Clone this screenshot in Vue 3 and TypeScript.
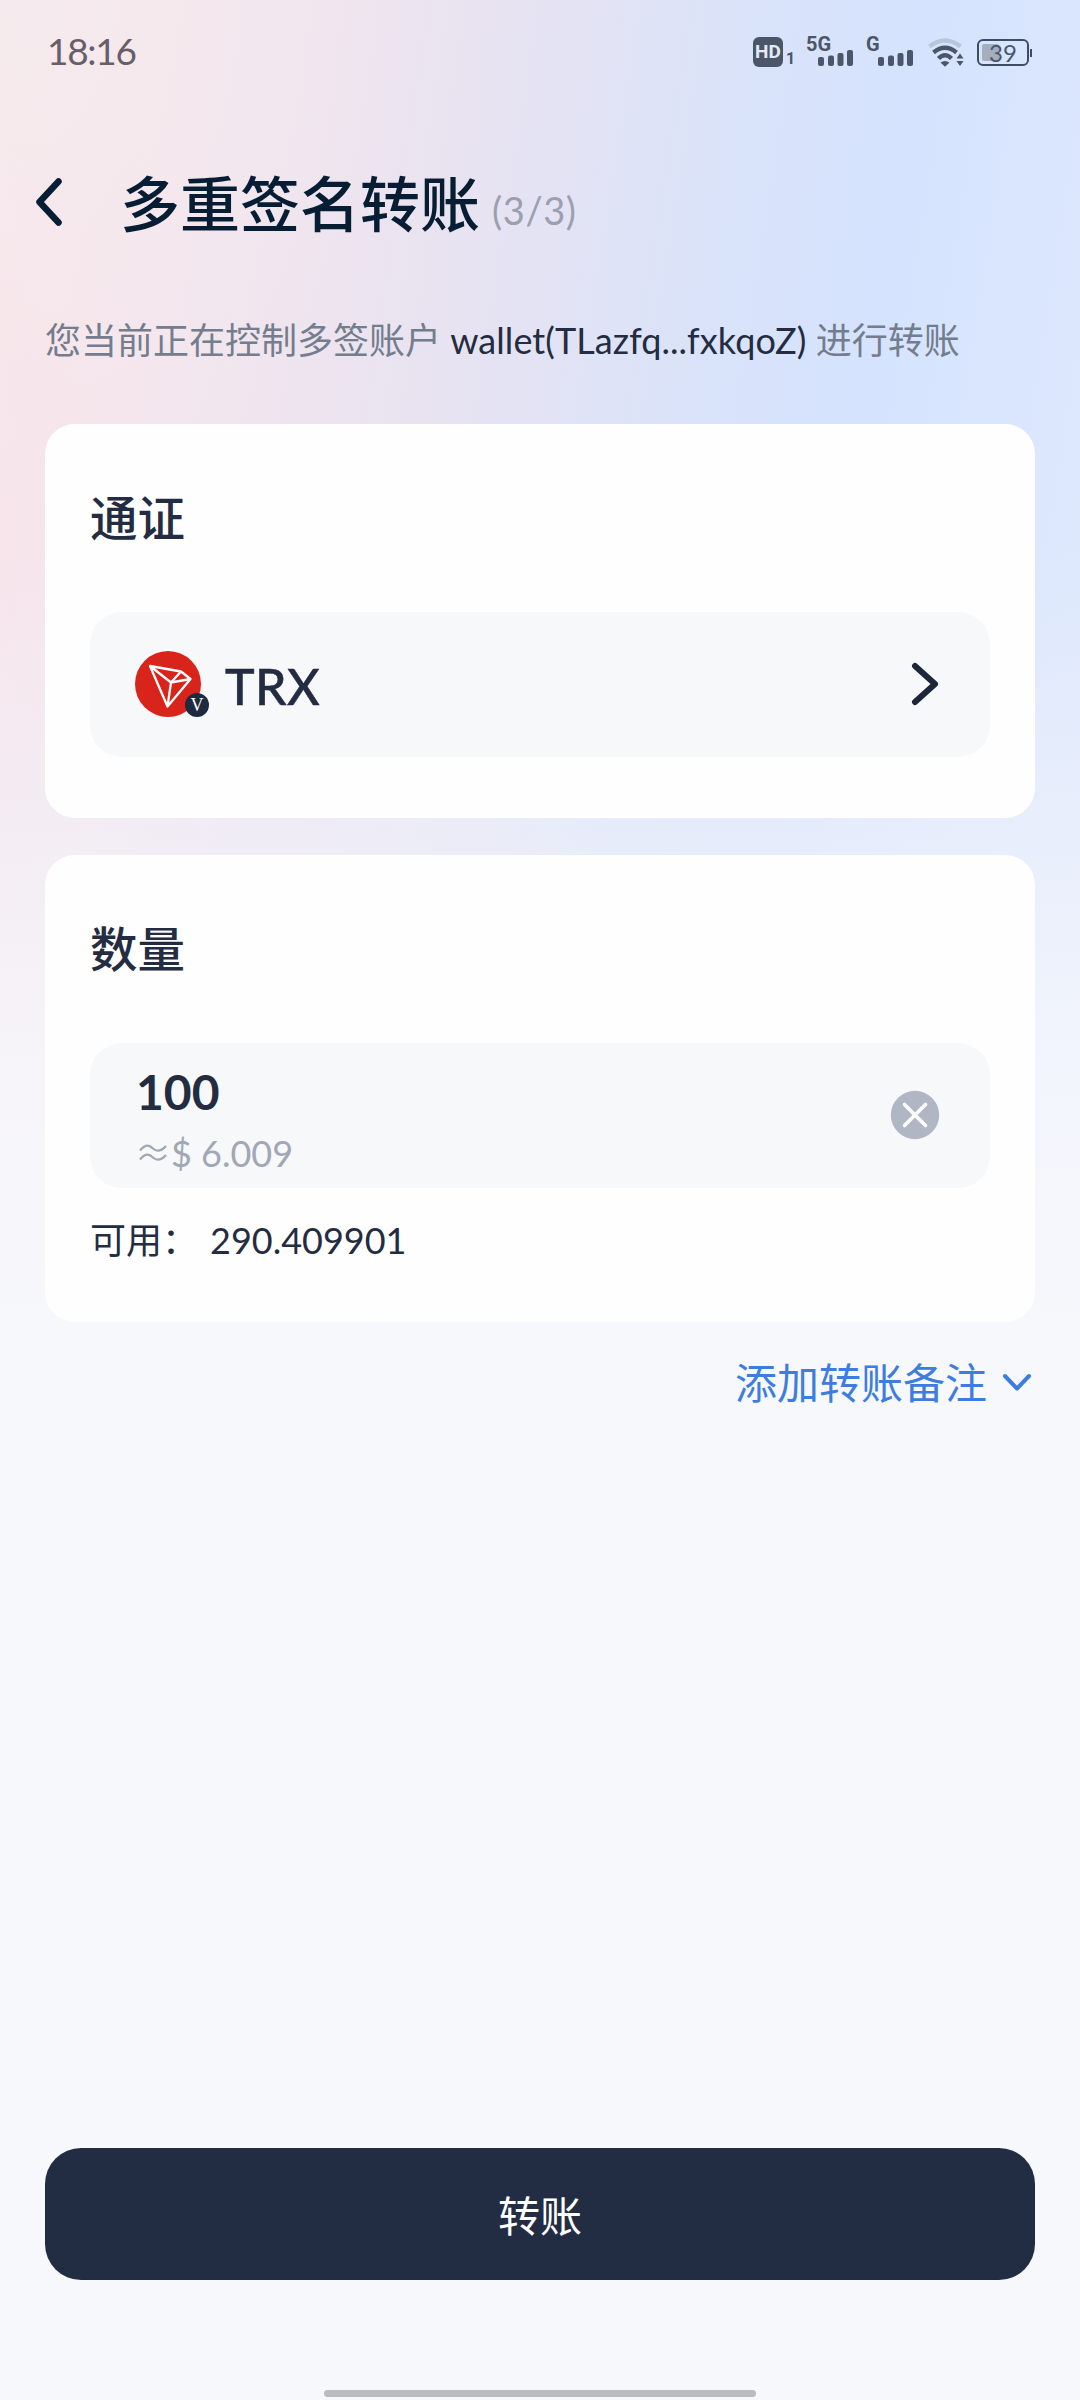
<script setup lang="ts">
interface SignalGroup {
  label: string
}

const signals: SignalGroup[] = [{ label: '5G' }, { label: 'G' }]
const account = 'wallet(TLazfq...fxkqoZ)'
const amount = '100'
const fiat = '6.009'
const available = '290.409901'
const battery = 39
</script>

<template>
  <div class="screen">
    <div class="status">
      <span class="clock">18:16</span>
      <div class="indicators">
        <div class="hd"><span>HD</span></div>
        <span class="sim">1</span>
        <div v-for="s in signals" :key="s.label" class="signal">
          <span class="net">{{ s.label }}</span>
          <svg class="bars" width="36" height="17" viewBox="0 0 36 17">
            <rect x="0" y="7" width="6" height="9" rx="2" />
            <rect x="10" y="5.500" width="6" height="10.500" rx="2" />
            <rect x="19.500" y="3" width="6" height="13" rx="2" />
            <rect x="29" y="0" width="6" height="16" rx="2" />
          </svg>
        </div>
        <svg class="wifi" width="38" height="29" viewBox="0 0 38 29">
          <g fill="none" stroke-width="4.400">
            <path d="M1.500 8.500Q17 -3.500 32.500 8.500" stroke="#b9c5da" />
            <path d="M5.500 14.500Q17 5 28.500 14.500" stroke="#4b5669" />
            <path d="M10.500 20.500Q17 14 23.500 20.500" stroke="#4b5669" />
          </g>
          <path d="M12.500 24.500Q17 21.500 21.500 24.500L17 28.800Z" fill="#4b5669" />
          <path d="M28.500 20.500L32 15.500L35.500 20.500ZM28.500 23L32 28L35.500 23Z" fill="#4b5669" />
        </svg>
        <div class="battery">
          <i class="level"></i>
          <span>{{ battery }}</span>
          <i class="tip"></i>
        </div>
      </div>
    </div>

    <header class="header">
      <svg class="back" width="28" height="54" viewBox="0 0 28 54">
        <path d="M24.500 6.500L5.500 27L24.500 47.500" />
      </svg>
      <h1>多重签名转账</h1>
      <span class="step">(3/3)</span>
    </header>

    <p class="notice">您当前正在控制多签账户 <b>{{ account }}</b> 进行转账</p>

    <section class="card token-card">
      <h2>通证</h2>
      <div class="field token">
        <div class="coin">
          <svg width="66" height="66" viewBox="0 0 66 66">
            <circle cx="33" cy="33" r="33" fill="#d9241c" />
            <path
              d="M15 15L46 20.500L55.500 28L32.500 55.500ZM15 15L36 31.500L46 20.500M36 31.500L55.500 28M36 31.500L32.500 55.500"
              fill="none" stroke="#fff" stroke-width="2.300" stroke-linejoin="round"
            />
          </svg>
          <span class="badge">V</span>
        </div>
        <span class="symbol">TRX</span>
        <svg class="go" width="28" height="44" viewBox="0 0 28 44">
          <path d="M4 4L24 22L4 40" />
        </svg>
      </div>
    </section>

    <section class="card amount-card">
      <h2>数量</h2>
      <div class="field amount">
        <div class="values">
          <span class="value">{{ amount }}</span>
          <span class="fiat">
            <svg width="28" height="18" viewBox="0 0 28 18">
              <path d="M1 6.500C7 -1 11 1.500 14 4.500S22 8 27 2M1 15.500C7 8 11 10.500 14 13.500S22 17 27 11" />
            </svg>
            <span>$ {{ fiat }}</span>
          </span>
        </div>
        <svg class="clear" width="50" height="50" viewBox="0 0 50 50">
          <circle cx="25" cy="25" r="24.200" fill="#b1b6c4" />
          <path d="M14.500 14.500L35.500 35.500M35.500 14.500L14.500 35.500" fill="none" stroke="#fff" stroke-width="3.600" stroke-linecap="round" />
        </svg>
      </div>
      <div class="available"><span class="caption">可用：</span><span>{{ available }}</span></div>
    </section>

    <div class="memo">
      <span>添加转账备注</span>
      <svg width="30" height="20" viewBox="0 0 30 20">
        <path d="M3 3L15 15.500L27 3" />
      </svg>
    </div>

    <footer class="footer">
      <button type="button" class="submit">转账</button>
      <i class="home"></i>
    </footer>
  </div>
</template>

<style>
body {
  margin: 0;
}
</style>

<style scoped>
.screen {
  display: flex;
  flex-direction: column;
  box-sizing: border-box;
  width: 1080px;
  height: 2400px;
  overflow: hidden;
  color: #232c41;
  font-family: Lato, "Noto Sans CJK SC", sans-serif;
  background:
    linear-gradient(180deg, rgba(247, 248, 252, 0) 0, rgba(247, 248, 252, 0) 540px, rgba(242, 243, 250, 0.55) 840px, rgba(247, 248, 252, 0.8) 1050px, #f7f8fc 1350px),
    radial-gradient(ellipse 420px 560px at 0 0, rgba(243, 239, 240, 0.6), rgba(243, 239, 240, 0)),
    linear-gradient(99deg, #f9e4e9 0, #f4e5ed 220px, #e8e3f1 490px, #dae3f9 740px, #d5e3fe 920px, #dde8fd 1150px);
}
.status {
  display: flex;
  align-items: center;
  justify-content: space-between;
  height: 104px;
  padding: 0 47px 0 48px;
  box-sizing: border-box;
}
.clock {
  margin-top: -2px;
  margin-left: -1px;
  color: #685d69;
  font-size: 37px;
  line-height: 46px;
  letter-spacing: -1.3px;
}
.indicators {
  display: flex;
  align-items: center;
  height: 32px;
  color: #4b5669;
}
.hd {
  display: flex;
  align-items: center;
  justify-content: center;
  width: 30px;
  height: 30px;
  margin-top: -1px;
  border-radius: 6px;
  background: #4b5669;
  color: #e4eaf8;
  font: 700 19px/30px Roboto, sans-serif;
}
.sim {
  width: 9px;
  margin: 14px 12px 0 3px;
  font: 700 16px/16px Roboto, sans-serif;
}
.signal {
  position: relative;
  width: 60px;
  height: 32px;
}
.net {
  position: absolute;
  left: -1px;
  top: 0;
  font: 700 20px/16px Roboto, sans-serif;
}
.bars {
  position: absolute;
  left: 11px;
  top: 14px;
  fill: #4b5669;
}
.wifi {
  margin: 1px 11px 0 1px;
}
.battery {
  position: relative;
  box-sizing: border-box;
  width: 52px;
  height: 27px;
  margin-right: 4px;
  border: 2px solid #3f4d63;
  border-radius: 6px;
  color: #4b5669;
  font: 400 24px/24px Lato, sans-serif;
  text-align: center;
}
.battery span {
  position: relative;
}
.level {
  position: absolute;
  left: 3px;
  top: 3px;
  width: 17px;
  height: 17px;
  border-radius: 2px;
  background: #a5aebe;
}
.tip {
  position: absolute;
  right: -5px;
  top: 8px;
  width: 2px;
  height: 8px;
  background: #3f4d63;
}
.header {
  display: flex;
  align-items: center;
  height: 104px;
  margin-top: 45px;
  padding-left: 34px;
}
.back,
.go,
.memo svg {
  fill: none;
  stroke-linecap: round;
  stroke-linejoin: round;
}
.back {
  margin-right: 58px;
  margin-top: 2px;
  stroke: #061d33;
  stroke-width: 6.5;
}
h1 {
  margin: 0;
  color: #061d33;
  font: 500 60px/88px "Noto Sans CJK SC", sans-serif;
}
.step {
  margin: 17px 0 0 12px;
  color: #9b9fae;
  font-size: 38px;
  letter-spacing: 0.6px;
}
.notice {
  margin: 60px 0 0 45px;
  height: 54px;
  color: #747d8e;
  font-size: 36px;
  line-height: 54px;
  white-space: nowrap;
}
.notice b {
  color: #232c41;
  font-weight: 400;
  letter-spacing: 0.06px;
}
.card {
  margin: 0 45px;
  box-sizing: border-box;
  border-radius: 30px;
  background: #fefefe;
}
.token-card {
  height: 394px;
  margin-top: 57px;
  padding: 57px 45px 0;
}
.amount-card {
  height: 467px;
  margin-top: 37px;
  padding: 57px 45px 0;
}
h2 {
  margin: 0;
  height: 70px;
  font: 500 47.5px/70px "Noto Sans CJK SC", sans-serif;
}
.field {
  display: flex;
  align-items: center;
  box-sizing: border-box;
  height: 145px;
  margin-top: 61px;
  border-radius: 32px;
  background: #f7f8fa;
}
.token {
  padding: 0 51px 0 45px;
}
.coin {
  position: relative;
  width: 66px;
  height: 66px;
  margin-top: -2px;
}
.badge {
  position: absolute;
  left: 50px;
  top: 42px;
  width: 24px;
  height: 24px;
  border-radius: 50%;
  background: #1d2a40;
  color: #fff;
  font: 400 18px/25px "Liberation Serif", serif;
  text-align: center;
}
.symbol {
  margin: 3px 0 0 24px;
  font-size: 50px;
  font-weight: 500;
  letter-spacing: 0.4px;
  -webkit-text-stroke: 0.5px currentColor;
}
.go {
  margin-top: -2px;
  margin-left: auto;
  stroke: #1e2639;
  stroke-width: 6;
}
.amount {
  padding: 0 50px 0 46px;
}
.values {
  display: flex;
  flex-direction: column;
  padding-top: 12px;
}
.value {
  height: 63px;
  font-size: 48px;
  font-weight: 700;
  line-height: 60px;
}
.fiat {
  display: flex;
  align-items: center;
  height: 56px;
  color: #a1a7b5;
  font-size: 36px;
  line-height: 56px;
}
.fiat svg {
  margin: 0 4px 0 3px;
  fill: none;
  stroke: #a1a7b5;
  stroke-width: 2.2;
}
.clear {
  margin-top: -1px;
  margin-left: auto;
}
.available {
  display: flex;
  margin-top: 25px;
  font-size: 36px;
  line-height: 54px;
}
.caption {
  width: 120px;
}
.memo {
  display: flex;
  align-items: center;
  justify-content: flex-end;
  height: 62px;
  margin: 28px 48px 0 0;
  color: #3d7de0;
  font: 400 42px/62px "Noto Sans CJK SC", sans-serif;
}
.memo svg {
  margin-top: 4px;
  margin-left: 15px;
  stroke: #3d7de0;
  stroke-width: 4;
}
.footer {
  display: flex;
  flex-direction: column;
  align-items: center;
  margin-top: auto;
  padding-bottom: 3px;
}
.submit {
  width: 990px;
  height: 132px;
  padding: 0;
  border: 0;
  border-radius: 36px;
  background: #222c43;
  color: #fff;
  font: 400 42px/132px "Noto Sans CJK SC", sans-serif;
}
.home {
  width: 432px;
  height: 7px;
  margin-top: 110px;
  border-radius: 4px;
  background: #bbbcc0;
}
</style>
